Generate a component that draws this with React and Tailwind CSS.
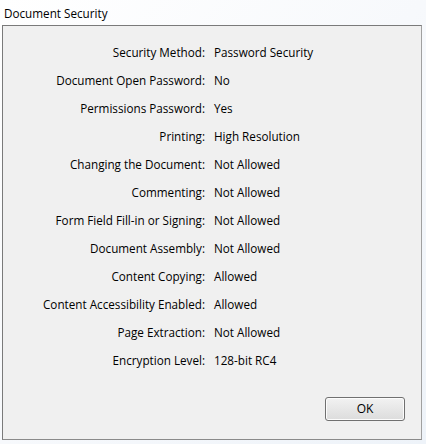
import React from "react";

const rows = [
  ["Security Method:", "Password Security"],
  ["Document Open Password:", "No"],
  ["Permissions Password:", "Yes"],
  ["Printing:", "High Resolution"],
  ["Changing the Document:", "Not Allowed"],
  ["Commenting:", "Not Allowed"],
  ["Form Field Fill-in or Signing:", "Not Allowed"],
  ["Document Assembly:", "Not Allowed"],
  ["Content Copying:", "Allowed"],
  ["Content Accessibility Enabled:", "Allowed"],
  ["Page Extraction:", "Not Allowed"],
  ["Encryption Level:", "128-bit RC4"],
];

export default function App() {
  return (
    <div
      className="w-[426px] h-[444px] bg-gradient-to-br from-[#ffffff] via-[#f7f9fc] to-[#eef3f9] text-[11.7px] text-black flex flex-col overflow-hidden"
      style={{ fontFamily: '"Open Sans", "Noto Sans", sans-serif' }}
    >
      <div className="h-[25px] pl-[4px] pt-[4px] leading-[18px]">Document Security</div>
      <div className="ml-[2px] w-[420px] h-[415px] bg-[#f0f0f0] border border-t-[#7a7a7a] border-l-[#7a7a7a] border-r-[#a0a0a0] border-b-[#8a8a8a] flex flex-col">
        <div className="pt-[13px] flex flex-col">
          {rows.map(([l, v]) => (
            <div key={l} className="flex h-[28px] items-center">
              <div className="w-[202px] text-right whitespace-nowrap">{l}</div>
              <div className="pl-[9px] whitespace-nowrap">{v}</div>
            </div>
          ))}
        </div>
        <div className="flex-1" />
        <div className="flex justify-end pr-[16px] pb-[18px]">
          <button className="w-[80px] h-[24px] rounded-[3px] border border-[#707070] bg-gradient-to-b from-[#f2f2f2] to-[#dcdcdc] text-[12px] shadow-[inset_0_0_0_1px_#fcfcfc]">
            OK
          </button>
        </div>
      </div>
    </div>
  );
}
